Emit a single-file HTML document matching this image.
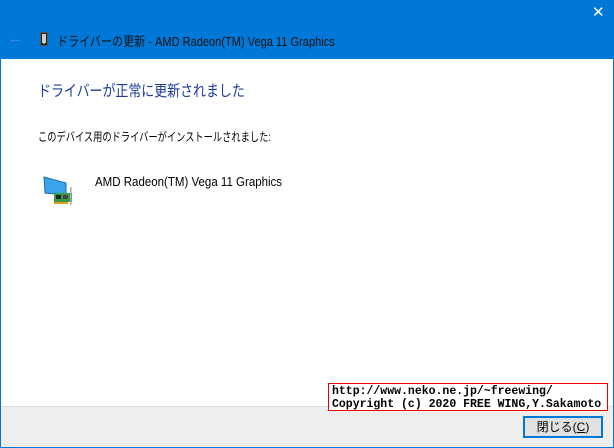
<!DOCTYPE html>
<html><head><meta charset="utf-8"><style>
*{margin:0;padding:0;box-sizing:border-box}
body{width:614px;height:448px;overflow:hidden;background:#0078d7;font-family:"Liberation Sans","Noto Sans CJK JP",sans-serif;position:relative}
.white{position:absolute;left:1px;top:59px;width:612px;height:347px;background:#fff}
.foot{position:absolute;left:1px;top:406px;width:612px;height:41px;background:#eee;border-top:1px solid #dcdcdc}
.t{position:absolute;white-space:nowrap;transform-origin:0 0}
</style></head><body>
<div class="t" style="left:592px;top:3px;color:#fff;font-size:15px">✕</div>
<div class="t" style="left:8px;top:30px;color:#4a8fd6;font-size:15px">←</div>
<div style="position:absolute;left:40px;top:32px;width:8px;height:14px;background:#222;border:1px solid #555"><div style="position:absolute;left:1px;top:1px;width:4px;height:9px;background:#ccc"></div><div style="position:absolute;left:2px;top:10px;width:2px;height:1px;background:#3c3"></div></div>
<div class="t" style="left:57px;top:31px;color:#111;font-size:13px;transform:scaleX(0.85)">ドライバーの更新 - AMD Radeon(TM) Vega 11 Graphics</div>
<div class="white"></div>
<div class="t" style="left:38px;top:79px;color:#1c3c9c;font-size:15.5px;transform:scaleX(0.835)">ドライバーが正常に更新されました</div>
<div class="t" style="left:38px;top:128px;color:#000;font-size:12px;transform:scaleX(0.77)">このデバイス用のドライバーがインストールされました:</div>
<svg style="position:absolute;left:42px;top:173px" width="32" height="34"><polygon points="2,4 24,10 24,22 3,20" fill="#3aa3ea" stroke="#1d6fb0"/><rect x="12" y="20" width="18" height="9" fill="#3a9a4a"/><rect x="14" y="22" width="5" height="4" fill="#222"/><rect x="21" y="22" width="5" height="4" fill="#444"/><rect x="28" y="14" width="1.5" height="18" fill="#aaa"/><rect x="12" y="29" width="14" height="2" fill="#d8a020"/></svg>
<div class="t" style="left:95px;top:175px;color:#000;font-size:12.5px;transform:scaleX(0.92)">AMD Radeon(TM) Vega 11 Graphics</div>
<div class="foot"></div>
<div style="position:absolute;left:328px;top:383px;width:280px;height:28px;border:1px solid #e00;background:#fff;font-family:'Liberation Mono',monospace;font-size:11.5px;font-weight:bold;line-height:13px;padding:1px 0 0 3px;white-space:nowrap">http://www.neko.ne.jp/~freewing/<br>Copyright (c) 2020 FREE WING,Y.Sakamoto</div>
<div style="position:absolute;left:523px;top:416px;width:80px;height:22px;border:2px solid #0078d7;background:#e1e1e1;font-size:12px;text-align:center;line-height:18px;color:#000">閉じる(<u>C</u>)</div>
</body></html>
